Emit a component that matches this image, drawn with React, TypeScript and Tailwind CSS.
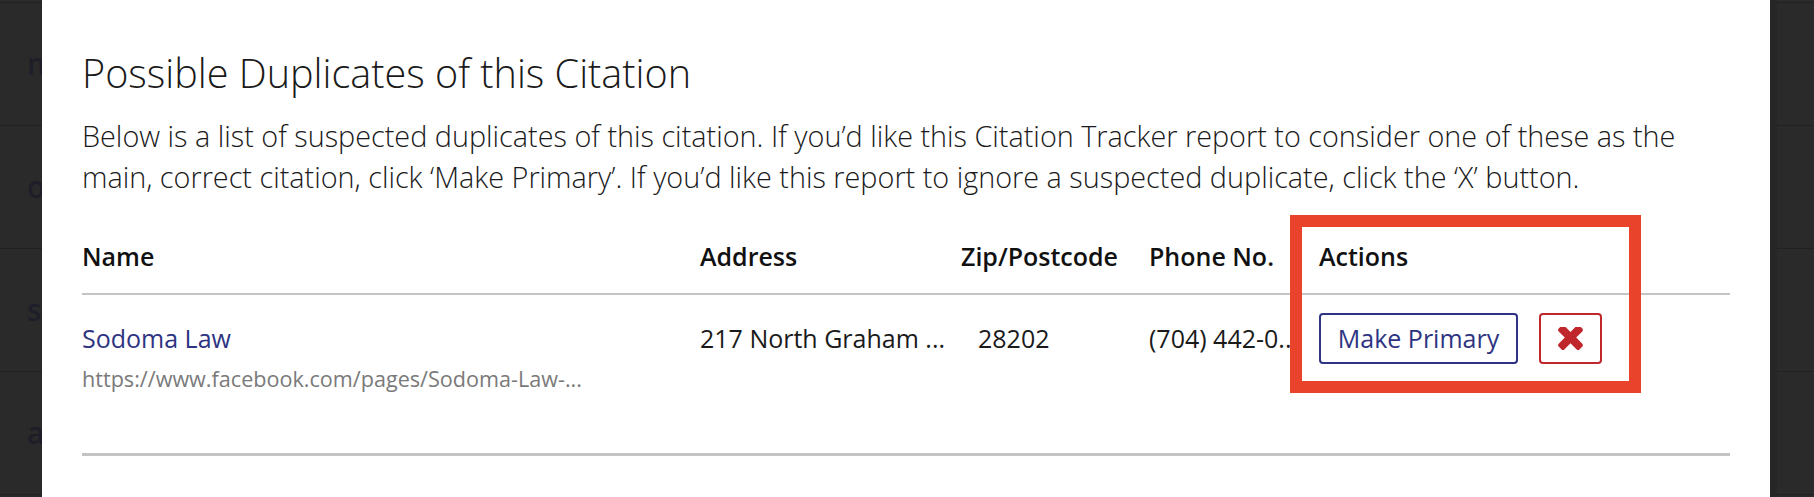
const sideRows = ['m', 'o', 'su', 'a']

function SideStrip({ letters, right }: { letters?: boolean; right?: boolean }) {
  return (
    <div
      className={
        right
          ? 'w-[44px] shrink-0 bg-[#2a2a2a] overflow-hidden border-l-[7px] border-[#262626]'
          : 'w-[42px] shrink-0 bg-[#2a2a2a] overflow-hidden'
      }
    >
      <div className="h-[3px] border-b border-[#212121]" />
      {sideRows.map((t) => (
        <div key={t} className="h-[123px] border-b border-[#212121] flex items-center pl-[27px]">
          {letters && (
            <span className="text-[30px] font-semibold text-[#1e1e29] whitespace-nowrap leading-none">{t}</span>
          )}
        </div>
      ))}
    </div>
  )
}

function TimesIcon() {
  return (
    <svg viewBox="110 346 1188 1100" className="w-[25px] h-[23px]" fill="#c0272d">
      <path d="M1298 1214q0 40-28 68l-136 136q-28 28-68 28t-68-28l-294-294-294 294q-28 28-68 28t-68-28l-136-136q-28-28-28-68t28-68l294-294-294-294q-28-28-28-68t28-68l136-136q28-28 68-28t68 28l294 294 294-294q28-28 68-28t68 28l136 136q28 28 28 68t-28 68l-294 294 294 294q28 28 28 68z" />
    </svg>
  )
}

export default function App() {
  return (
    <div
      className="w-[1814px] h-[497px] flex overflow-hidden bg-[#2a2a2a]"
      style={{ fontFamily: '"Open Sans", "Noto Sans", sans-serif' }}
    >
      <SideStrip letters />
      <div className="flex-1 bg-white relative px-[40px] pt-[49px]">
        <h2 className="text-[39.6px] font-light text-[#1a1a1a] leading-[48px]">Possible Duplicates of this Citation</h2>
        <p className="mt-[18px] text-[28.8px] font-light leading-[41px] text-[#1a1a1a] whitespace-nowrap">
          Below is a list of suspected duplicates of this citation. If you’d like this Citation Tracker report to
          consider one of these as the
          <br />
          main, correct citation, click ‘Make Primary’. If you’d like this report to ignore a suspected duplicate,
          click the ‘X’ button.
        </p>

        <div className="mt-[44px]">
          <div className="grid grid-cols-[618px_261px_188px_170px_1fr] pb-[22px] leading-[30px] border-b-2 border-[#c4c4c4] text-[25px] font-semibold text-[#111]">
            <div>Name</div>
            <div>Address</div>
            <div className="whitespace-nowrap">Zip/Postcode</div>
            <div className="whitespace-nowrap">Phone No.</div>
            <div>Actions</div>
          </div>
          <div className="grid grid-cols-[618px_261px_188px_170px_1fr] h-[161px] border-b-[3px] border-[#c4c4c4] text-[25px] leading-[34px] text-[#1a1a1a] pt-[26px]">
            <div>
              <a className="text-[#2e3482] block">Sodoma Law</a>
              <div className="text-[21.6px] text-[#7a7a7a] mt-[11px] leading-[26px] whitespace-nowrap">
                https://www.facebook.com/pages/Sodoma-Law-...
              </div>
            </div>
            <div className="whitespace-nowrap">217 North Graham ...</div>
            <div className="pl-[17px]">28202</div>
            <div className="whitespace-nowrap">(704) 442-0...</div>
            <div className="flex items-start gap-[21px] -mt-[8px]">
              <button className="h-[51px] w-[199px] border-2 border-[#2e3482] rounded-[4px] text-[#2e3482] text-[25px] leading-none">
                Make Primary
              </button>
              <button className="h-[51px] w-[63px] border-2 border-[#c0272d] rounded-[4px] flex items-center justify-center">
                <TimesIcon />
              </button>
            </div>
          </div>
        </div>

        <div className="absolute left-[1248px] top-[215px] w-[351px] h-[178px] border-[12px] border-[#e9432b]" />
      </div>
      <SideStrip right />
    </div>
  )
}
